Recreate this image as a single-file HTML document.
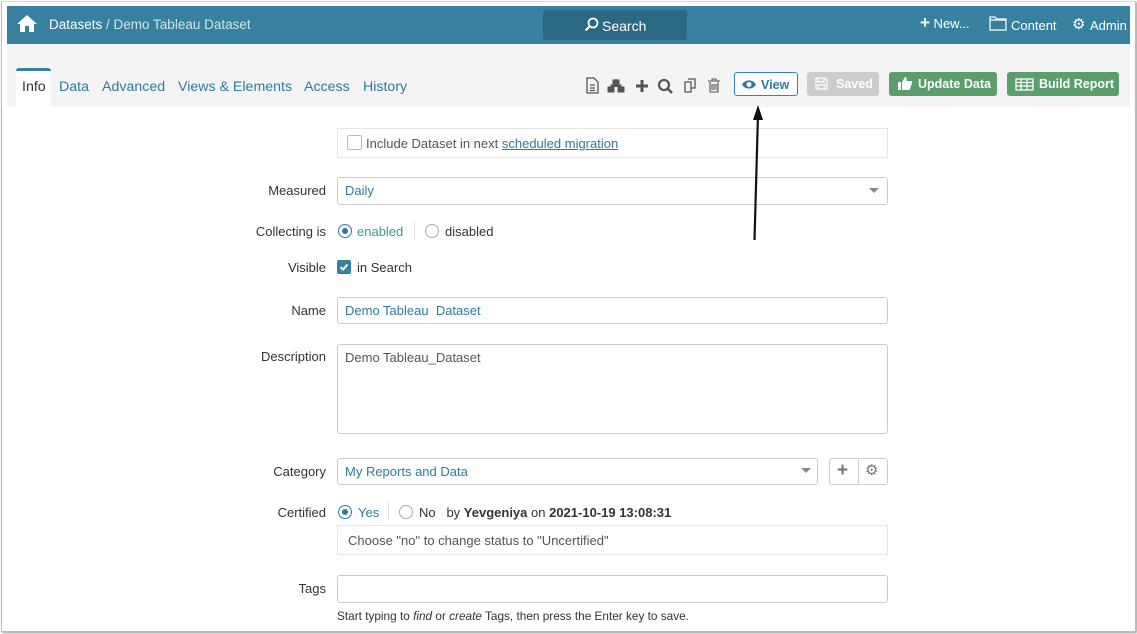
<!DOCTYPE html>
<html><head><style>
body{margin:0;width:1137px;height:634px;background:#fff;font-family:"Liberation Sans",sans-serif;position:relative;overflow:hidden;font-size:13px;color:#333}
.frame{position:absolute;left:1px;top:1px;width:1133px;height:629px;border:1px solid #bbb;border-top-color:#ddd;box-shadow:1px 1px 2px #999}
.hdr{position:absolute;left:7px;top:6px;width:1123px;height:38px;background:#37809f;color:#fff}
.band{position:absolute;left:7px;top:44px;width:1123px;height:63px;background:#f4f4f4}
.abs{position:absolute}
.tab{position:absolute;top:79px;font-size:14.2px;color:#2f7a9d}
.lbl{position:absolute;right:811px;font-size:13px;color:#333;text-align:right}
.inp{position:absolute;left:337px;width:549px;border:1px solid #ccc;border-radius:3px;background:#fff}
.val{position:absolute;font-size:13px;color:#2f7a9d}
.btn{position:absolute;top:72px;height:24px;border-radius:3px;font-size:12.5px;font-weight:bold;color:#fff;line-height:24px;box-sizing:border-box}
.radio{position:absolute;width:12px;height:12px;border:1px solid #aaa;border-radius:50%;background:#fff}
.radio.on{border-color:#2f7a9d}
.radio.on:after{content:"";position:absolute;left:3px;top:3px;width:6px;height:6px;border-radius:50%;background:#2f7a9d}
</style></head><body>
<div class="frame"></div>
<div class="hdr">
 <svg class="abs" style="left:9px;top:8px" width="22" height="19" viewBox="0 0 22 19"><path d="M11 1 L1 10 H4 V18 H9 V12 H13 V18 H18 V10 H21 Z" fill="#fff"/></svg>
 <div class="abs" style="left:42px;top:11px;font-size:13.5px"><span>Datasets</span><span style="color:#cfe3ec"> / Demo Tableau Dataset</span></div>
 <div class="abs" style="left:536px;top:4px;width:144px;height:30px;background:#2b6883;border-radius:3px"></div>
 <svg class="abs" style="left:577px;top:11px" width="15" height="15" viewBox="0 0 15 15"><circle cx="9" cy="6" r="4.5" stroke="#fff" stroke-width="1.8" fill="none"/><path d="M6 9 L1.5 13.5" stroke="#fff" stroke-width="2"/></svg>
 <div class="abs" style="left:595px;top:12px;font-size:14px">Search</div>
 <div class="abs" style="left:913px;top:10px;font-size:13px"><b style="font-size:17px;line-height:12px">+</b> New...</div>
 <svg class="abs" style="left:982px;top:10px" width="18" height="15" viewBox="0 0 18 15"><path d="M1 1H6L7.5 3H17V14H1Z M1 4H17" stroke="#fff" fill="none" stroke-width="1.2"/></svg>
 <div class="abs" style="left:1004px;top:12px">Content</div>
 <div class="abs" style="left:1065px;top:9px;font-size:15px">⚙</div>
 <div class="abs" style="left:1083px;top:12px">Admin</div>
</div>
<div class="band"></div>
<div class="abs" style="left:16px;top:68px;width:35px;height:39px;background:#fff;border-top:3px solid #37809f;border-radius:3px 3px 0 0;box-sizing:border-box"></div>
<div class="tab" style="left:22px;color:#333">Info</div>
<div class="tab" style="left:59px">Data</div>
<div class="tab" style="left:102px">Advanced</div>
<div class="tab" style="left:178px">Views &amp; Elements</div>
<div class="tab" style="left:304px">Access</div>
<div class="tab" style="left:363px">History</div>
<svg class="abs" style="left:585px;top:77px" width="145" height="18" viewBox="0 0 145 18" fill="none" stroke="#555" stroke-width="1.3">
 <path d="M2 1H9L13 5V16H2Z M5 8H10 M5 11H10 M5 13.5H10"/>
 <path d="M31 2V6 M26 10V8H36V10 M23 10H29V15H23Z M33 10H39V15H33Z M28 3H34V7H28Z" fill="#555" stroke-width="1"/>
 <path d="M57 3V15 M51 9H63" stroke-width="3"/>
 <circle cx="79" cy="8" r="5" stroke-width="2.2"/><path d="M83 12L87 16" stroke-width="2.6"/>
 <path d="M100 5H106V15H100Z M103 2H110V11H106" />
 <path d="M125 5V15H133V5 M123 4H135 M127 4V2H131V4 M127 7V13 M129 7V13 M131 7V13" stroke-width="1.1"/>
</svg>
<div class="btn" style="left:734px;width:64px;border:1px solid #3a84a8;background:#fff;color:#2f7a9d;padding-left:26px">View</div>
<svg class="abs" style="left:741px;top:79px" width="16" height="11" viewBox="0 0 16 11"><path d="M1 5.5C4 0 12 0 15 5.5C12 11 4 11 1 5.5Z" fill="#2f7a9d"/><circle cx="8" cy="5.5" r="2.5" fill="#fff"/></svg>
<div class="btn" style="left:807px;width:72px;background:#ccc;padding-left:29px">Saved</div>
<svg class="abs" style="left:815px;top:77px" width="13" height="13" viewBox="0 0 13 13"><path d="M1 1H10L12 3V12H1Z M3 1V5H9V1 M3 8H10V12H3Z" stroke="#fff" fill="none" stroke-width="1.2"/></svg>
<div class="btn" style="left:889px;width:108px;background:#5b9e6c;padding-left:29px">Update Data</div>
<svg class="abs" style="left:897px;top:76px" width="16" height="15" viewBox="0 0 16 15"><path d="M1 6H4V14H1Z M5 6L8 1C10 1 10 3 9.5 5H14C15 5 15.5 6 15 7L13 13C12.7 14 12 14 11 14H5Z" fill="#fff"/></svg>
<div class="btn" style="left:1007px;width:112px;background:#5b9e6c;padding-left:32px">Build Report</div>
<svg class="abs" style="left:1015px;top:78px" width="19" height="13" viewBox="0 0 19 13"><path d="M1 1H18V12H1Z M1 4.5H18 M1 8H18 M6 1V12 M12 1V12" stroke="#fff" fill="none" stroke-width="1.3"/></svg>
<div class="inp" style="top:128px;height:28px;border-color:#e5e5e5;border-radius:0"></div>
<div class="abs" style="left:347px;top:135px;width:13px;height:13px;border:1px solid #bbb;border-radius:2px"></div>
<div class="abs" style="left:366px;top:136px;color:#555">Include Dataset in next <span style="color:#2f7a9d;text-decoration:underline">scheduled migration</span></div>
<div class="lbl" style="top:183px">Measured</div>
<div class="inp" style="top:177px;height:26px"></div>
<div class="val" style="left:345px;top:183px">Daily</div>
<div class="abs" style="left:869px;top:188px;border:5px solid transparent;border-top:5px solid #888;border-bottom:0"></div>
<div class="lbl" style="top:224px">Collecting is</div>
<div class="radio on" style="left:338px;top:224px"></div>
<div class="val" style="left:357px;top:224px;color:#3a9a8a">enabled</div>
<div class="abs" style="left:414px;top:222px;width:1px;height:18px;background:#e3e3e3"></div>
<div class="radio" style="left:425px;top:224px"></div>
<div class="abs" style="left:445px;top:224px">disabled</div>
<div class="lbl" style="top:260px">Visible</div>
<div class="abs" style="left:337px;top:260px;width:14px;height:14px;background:#37809f;border-radius:2px"></div>
<svg class="abs" style="left:339px;top:262px" width="10" height="10" viewBox="0 0 10 10"><path d="M1.5 5L4 7.5L8.5 2.5" stroke="#fff" stroke-width="2" fill="none"/></svg>
<div class="abs" style="left:357px;top:260px">in Search</div>
<div class="lbl" style="top:303px">Name</div>
<div class="inp" style="top:297px;height:25px"></div>
<div class="val" style="left:345px;top:303px">Demo Tableau&nbsp; Dataset</div>
<div class="lbl" style="top:349px">Description</div>
<div class="inp" style="top:344px;height:88px"></div>
<div class="abs" style="left:345px;top:350px;color:#555">Demo Tableau_Dataset</div>
<div class="lbl" style="top:464px">Category</div>
<div class="inp" style="top:458px;height:25px;width:479px"></div>
<div class="val" style="left:345px;top:464px">My Reports and Data</div>
<div class="abs" style="left:801px;top:468px;border:5px solid transparent;border-top:5px solid #888;border-bottom:0"></div>
<div class="abs" style="left:829px;top:458px;width:57px;height:25px;border:1px solid #ccc;border-radius:3px"></div>
<div class="abs" style="left:858px;top:459px;width:1px;height:25px;background:#ccc"></div>
<div class="abs" style="left:837px;top:460px;font-size:19px;font-weight:bold;color:#777">+</div>
<div class="abs" style="left:865px;top:461px;font-size:15px;color:#777">⚙</div>
<div class="lbl" style="top:505px">Certified</div>
<div class="radio on" style="left:338px;top:505px"></div>
<div class="val" style="left:358px;top:505px">Yes</div>
<div class="abs" style="left:388px;top:502px;width:1px;height:18px;background:#e3e3e3"></div>
<div class="radio" style="left:399px;top:505px"></div>
<div class="abs" style="left:419px;top:505px">No&nbsp;&nbsp; by <b>Yevgeniya</b> on <b>2021-10-19 13:08:31</b></div>
<div class="inp" style="top:525px;height:28px;border-color:#e5e5e5;border-radius:0"></div>
<div class="abs" style="left:348px;top:533px;color:#555">Choose "no" to change status to "Uncertified"</div>
<div class="lbl" style="top:581px">Tags</div>
<div class="inp" style="top:575px;height:26px"></div>
<div class="abs" style="left:337px;top:609px;font-size:11.8px">Start typing to <i>find</i> or <i>create</i> Tags, then press the Enter key to save.</div>
<svg class="abs" style="left:745px;top:100px" width="25" height="145" viewBox="0 0 25 145"><path d="M9.5 140 L13 14" stroke="#111" stroke-width="2.2"/><path d="M13 5 L18 20 L8 20 Z" fill="#111"/></svg>
</body></html>
